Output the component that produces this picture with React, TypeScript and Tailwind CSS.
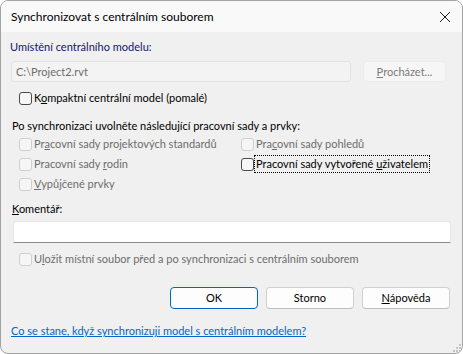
import type { ReactNode } from "react";

const font = { fontFamily: 'Lato, "Open Sans", sans-serif' };

function Box({ disabled }: { disabled?: boolean }) {
  return (
    <span
      className={
        disabled
          ? "h-[13px] w-[13px] shrink-0 rounded-[3px] border border-[#cfcfcf] bg-[#f5f5f5]"
          : "h-[13px] w-[13px] shrink-0 rounded-[3px] border border-[#4a4a4a] bg-[#f7f7f7]"
      }
    />
  );
}

function Check({ children, disabled, focused }: { children: ReactNode; disabled?: boolean; focused?: boolean }) {
  return (
    <div className="flex h-[20px] items-center">
      <Box disabled={disabled} />
      <span
        className={
          (disabled ? "text-[#6d6d6d] " : "text-black ") +
          (focused ? "ml-[1px] px-[1px] outline-1 outline-dotted outline-black" : "ml-[2px]")
        }
      >
        {children}
      </span>
    </div>
  );
}

function Btn({ children, primary }: { children: ReactNode; primary?: boolean }) {
  return (
    <button
      className={
        "h-[22px] w-[88px] rounded-[4px] bg-[#fdfdfd] text-black " +
        (primary ? "border border-[#0067c0]" : "border border-[#d0d0d0] border-b-[#bdbdbd]")
      }
    >
      {children}
    </button>
  );
}

export default function App() {
  return (
    <div
      className="flex h-[354px] w-[463px] flex-col overflow-hidden rounded-[8px] border border-[#a3a3a3] bg-[#f0f0f0] text-[11px] leading-[16px]"
      style={font}
    >
      <div className="flex h-[31px] shrink-0 items-center justify-between bg-[#f9f9f9] pl-[10px] pr-[10px]">
        <span className="text-[12px] text-black">Synchronizovat s centrálním souborem</span>
        <svg width="12" height="12" viewBox="0 0 12 12" className="mr-[1px]">
          <path d="M1 1 L11 11 M11 1 L1 11" stroke="#1a1a1a" strokeWidth="1" />
        </svg>
      </div>

      <div className="relative flex flex-1 flex-col px-[9px]">
        <div className="mt-[7px] text-[#141478]">Umístění centrálního modelu:</div>

        <div className="mt-[6px] flex items-center gap-[12px] pl-[1px]">
          <div className="flex h-[21px] w-[340px] items-center rounded-[3px] border border-[#e2e2e2] bg-[#f3f3f3] pl-[4px] text-[#6d6d6d]">
            C:\Project2.rvt
          </div>
          <button className="h-[21px] w-[83px] rounded-[4px] border border-[#ececec] bg-[#f6f6f6] text-[#7a7a7a]">
            <span className="underline">P</span>rocházet...
          </button>
        </div>

        <div className="mt-[6px] pl-[9px]">
          <Check>
            K<span className="underline">o</span>mpaktní centrální model (pomalé)
          </Check>
        </div>

        <div className="mt-[10px] pl-[2px] text-black">Po synchronizaci uvolněte následující pracovní sady a prvky:</div>

        <div className="grid grid-cols-[222px_1fr] pl-[9px]">
          <Check disabled>
            Pr<span className="underline">a</span>covní sady projektových standardů
          </Check>
          <Check disabled>
            Pra<span className="underline">c</span>ovní sady pohledů
          </Check>
          <Check disabled>
            Pracovní sady <span className="underline">r</span>odin
          </Check>
          <Check focused>
            Pracovní sady vytvořené <span className="underline">u</span>živatelem
          </Check>
          <Check disabled>
            <span className="underline">V</span>ypůjčené prvky
          </Check>
        </div>

        <div className="mt-[7px] pl-[2px] text-black">
          <span className="underline">K</span>omentář:
        </div>

        <div className="ml-[3px] mt-[4px] h-[22px] w-[438px] rounded-t-[3px] border border-[#e6e6e6] border-b-[#8a8a8a] bg-white" />

        <div className="mt-[6px] pl-[9px]">
          <Check disabled>
            U<span className="underline">l</span>ožit místní soubor před a po synchronizaci s centrálním souborem
          </Check>
        </div>

        <div className="mt-[18px] flex justify-end gap-[8px] pr-[3px]">
          <Btn primary>OK</Btn>
          <Btn>Storno</Btn>
          <Btn>
            <span className="underline">N</span>ápověda
          </Btn>
        </div>

        <div className="mt-[14px] pl-[1px]">
          <span className="text-[#0066cc] underline">Co se stane, když synchronizuji model s centrálním modelem?</span>
        </div>

        <svg width="8" height="8" viewBox="0 0 8 8" className="absolute bottom-[1px] right-[1px]">
          <rect x="6" y="0" width="2" height="2" fill="#c4c4c4" />
          <rect x="3" y="3" width="2" height="2" fill="#c4c4c4" />
          <rect x="6" y="3" width="2" height="2" fill="#c4c4c4" />
          <rect x="0" y="6" width="2" height="2" fill="#c4c4c4" />
          <rect x="3" y="6" width="2" height="2" fill="#c4c4c4" />
          <rect x="6" y="6" width="2" height="2" fill="#c4c4c4" />
        </svg>
      </div>
    </div>
  );
}
